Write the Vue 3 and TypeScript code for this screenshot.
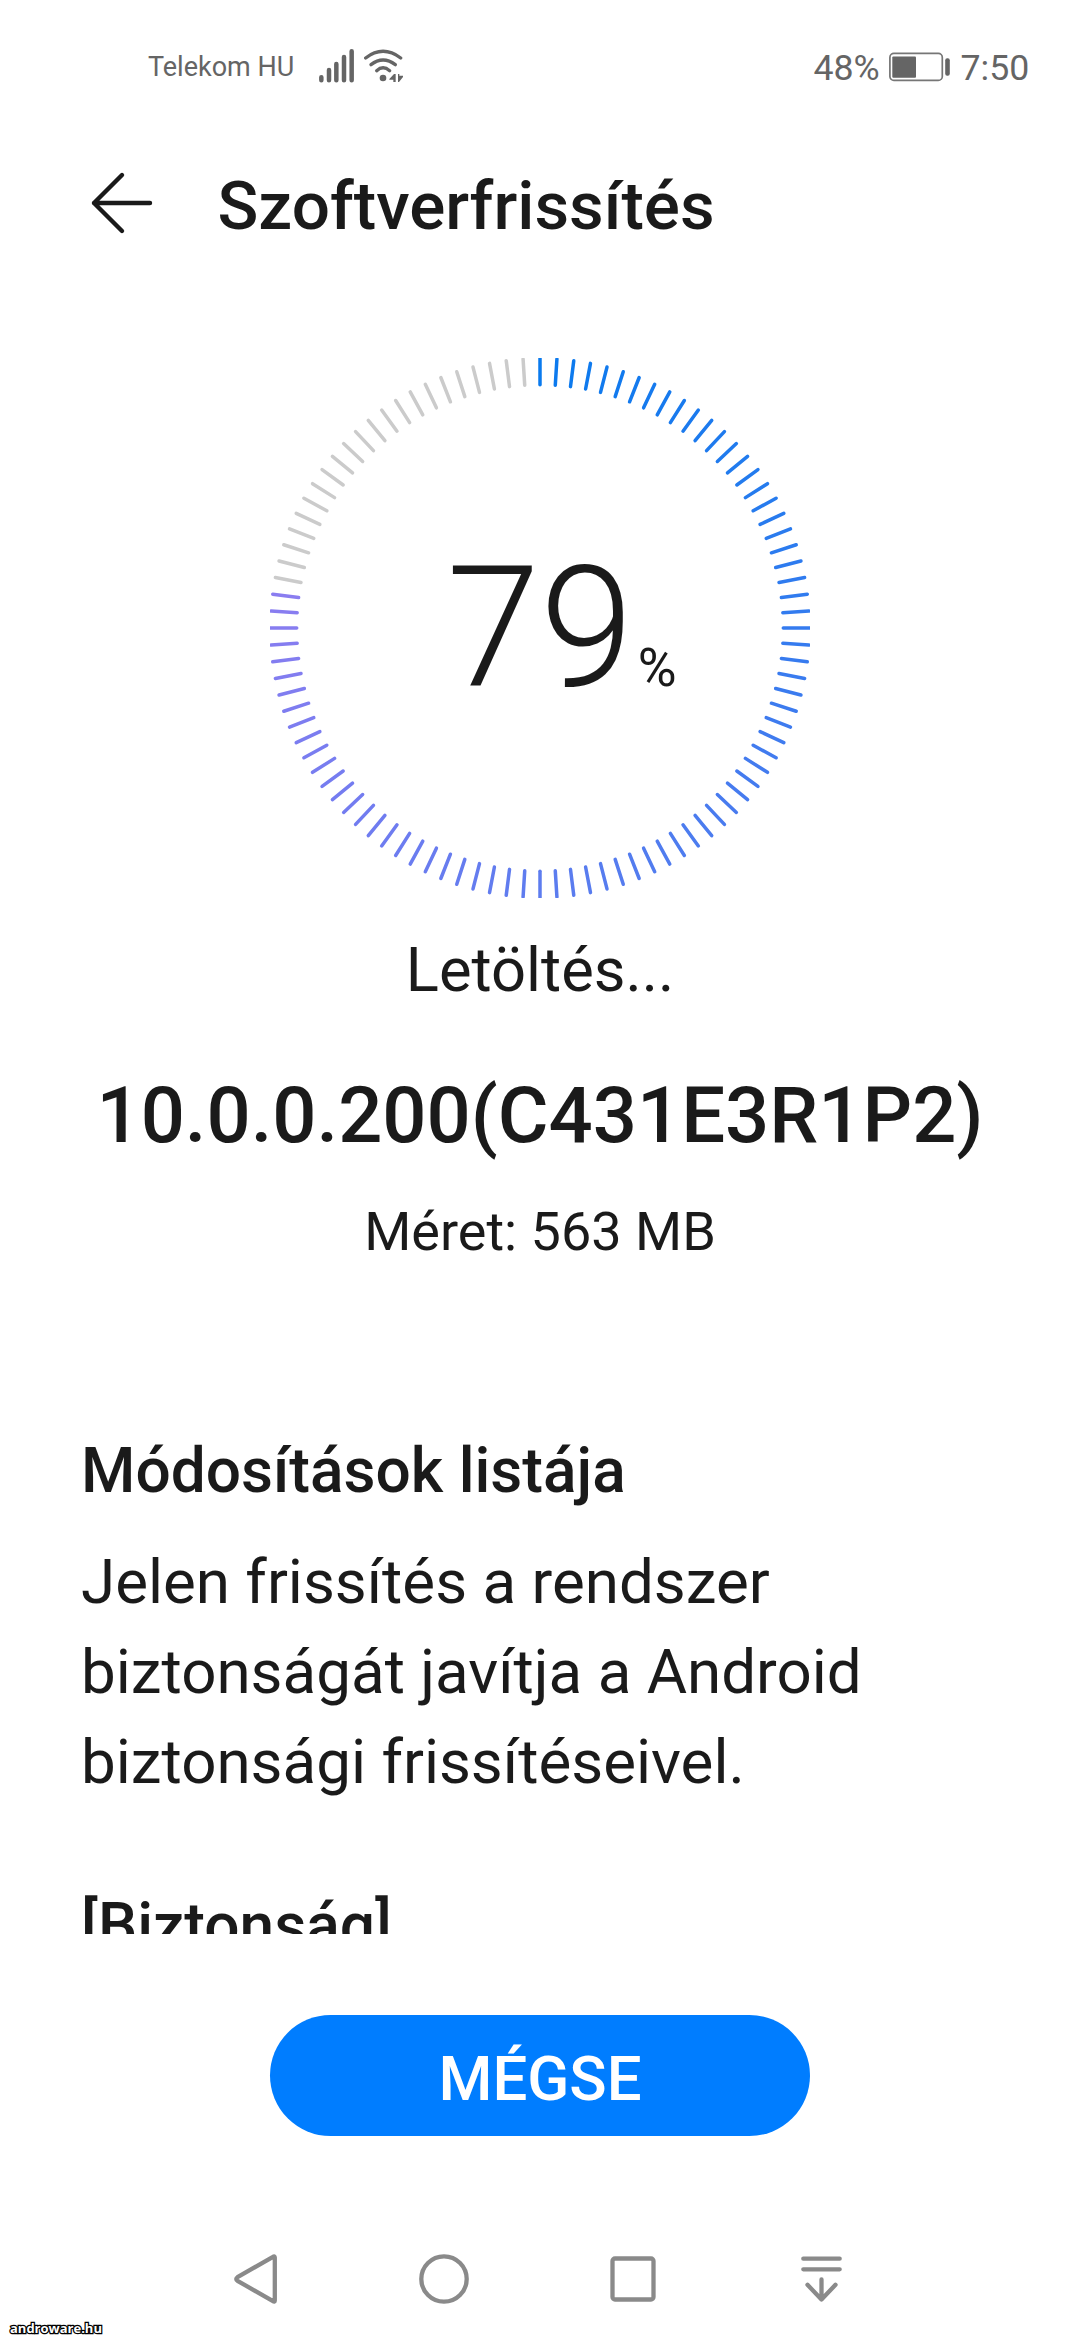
<script setup lang="ts">
interface Tick {
  x1: number
  y1: number
  x2: number
  y2: number
  color: string
}

const progress = 79
const tickCount = 100
const startColor = [10, 122, 238]
const endColor = [138, 125, 240]

const ticks: Tick[] = Array.from({ length: tickCount }, (_, i) => {
  const angle = (i / tickCount) * Math.PI * 2
  const sin = Math.sin(angle)
  const cos = Math.cos(angle)
  const t = i / (progress - 2)
  const mixed = startColor.map((c, k) => Math.round(c + (endColor[k] - c) * t))
  return {
    x1: 270 + 243.3 * sin,
    y1: 270 - 243.3 * cos,
    x2: 270 + 269.4 * sin,
    y2: 270 - 269.4 * cos,
    color: i < progress - 1 ? `rgb(${mixed.join(',')})` : '#cbcbcb',
  }
})
</script>

<template>
  <div class="screen">
    <div class="status">
      <span class="carrier">Telekom HU</span>
      <svg class="signals" viewBox="0 0 258 108" width="86" height="36">
        <g fill="none" stroke="#656565" stroke-linecap="round">
          <g stroke-width="13.5">
            <path d="M7 87.5V96.500M30 66V96.500M52 48V96.500M75 27V96.500M98 10V96.500" />
          </g>
          <g stroke-width="10">
            <path d="M140 30Q192 -10 245 30" />
            <path d="M156 50Q192 22 229 50" />
            <path d="M173 68Q192 51 212 68" />
          </g>
        </g>
        <circle cx="192" cy="90" r="10" fill="#656565" />
        <path d="M211 93L225 78H230V102H223V95H211ZM237 78H241V83H252V87L240 102H237Z" fill="#656565" />
      </svg>
      <span class="spacer"></span>
      <span class="percent">48%</span>
      <svg class="battery" viewBox="0 0 62 30" width="62" height="30">
        <rect x="0.900" y="1.400" width="52.400" height="27" rx="4" fill="none" stroke="#767676" stroke-width="1.700" />
        <rect x="3.300" y="4.500" width="23.700" height="21.300" rx="1" fill="#656565" />
        <rect x="56.200" y="6.300" width="4.600" height="17.400" rx="2" fill="#656565" />
      </svg>
      <span class="clock">7:50</span>
    </div>

    <div class="header">
      <svg class="back" viewBox="0 0 64 64" width="64" height="64">
        <path d="M33 4L5 32L33 60M5 32H61" fill="none" stroke="#1a1a1a" stroke-width="4.400" stroke-linecap="round" stroke-linejoin="round" />
      </svg>
      <h1>Szoftverfrissítés</h1>
    </div>

    <div class="content">
      <div class="ring">
        <svg viewBox="0 0 540 540" width="540" height="540">
          <line
            v-for="(tick, i) in ticks"
            :key="i"
            :x1="tick.x1"
            :y1="tick.y1"
            :x2="tick.x2"
            :y2="tick.y2"
            :stroke="tick.color"
            stroke-width="3.500"
            stroke-linecap="round"
          />
        </svg>
        <div class="value">
          <span class="number">{{ progress }}</span><span class="unit">%</span>
        </div>
      </div>
      <div class="state">Letöltés...</div>
      <div class="version">10.0.0.200(C431E3R1P2)</div>
      <div class="size">Méret: 563 MB</div>
      <div class="notes">
        <h2>Módosítások listája</h2>
        <p>Jelen frissítés a rendszer<br />biztonságát javítja a Android<br />biztonsági frissítéseivel.</p>
        <h2 class="next">[Biztonság]</h2>
      </div>
    </div>

    <button class="cancel" type="button">MÉGSE</button>

    <div class="nav">
      <svg viewBox="0 0 60 60" width="60" height="60">
        <path d="M48.800 8.600V51.400Q48.800 53.400 47 52.200L11.500 31.800Q9 30 11.500 28.200L47 7.800Q48.800 6.600 48.800 8.600Z" />
      </svg>
      <svg viewBox="0 0 60 60" width="60" height="60">
        <circle cx="30" cy="30" r="22.700" />
      </svg>
      <svg viewBox="0 0 60 60" width="60" height="60">
        <rect x="9.500" y="9.500" width="41" height="41" rx="2.500" />
      </svg>
      <svg viewBox="0 0 60 60" width="60" height="60">
        <path d="M12.300 9.700H48.700M12.300 20.300H48.700M30.500 30.500V50.500M16.500 35.800L30.500 50.500L44.500 35.800" />
      </svg>
    </div>

    <span class="watermark">androware.hu</span>
  </div>
</template>

<style>
body {
  background: #fff;
}
</style>

<style scoped>
.screen {
  position: relative;
  display: flex;
  flex-direction: column;
  width: 1080px;
  height: 2340px;
  overflow: hidden;
  background: #fff;
  color: #1a1a1a;
  font-family: Roboto, "Noto Sans", sans-serif;
}

.status {
  display: flex;
  align-items: center;
  box-sizing: border-box;
  height: 134px;
  padding: 0 50.500px 0 148px;
  color: #656565;
  white-space: nowrap;
}

.carrier {
  width: 171px;
  font-size: 27px;
}

.signals {
  margin-top: -2px;
}

.spacer {
  flex: 1;
}

.percent,
.clock {
  padding-top: 2px;
  font-size: 35.700px;
}

.percent {
  width: 75.600px;
}

.battery {
  width: 62px;
}

.clock {
  width: 69px;
  padding-left: 9.500px;
}

.header {
  display: flex;
  align-items: center;
  height: 144px;
  padding-left: 89px;
}

.back {
  margin-top: -7px;
}

h1 {
  margin: 0 0 0 64.500px;
  font-size: 67.400px;
  font-weight: 500;
  line-height: 80px;
}

.content {
  height: 1576px;
  padding-top: 80px;
  overflow: hidden;
  text-align: center;
}

.ring {
  display: grid;
  width: 540px;
  height: 540px;
  margin: 0 auto;
}

.ring > * {
  grid-area: 1 / 1;
}

.value {
  display: flex;
  align-items: baseline;
  padding: 186px 0 0 176.500px;
}

.number {
  font-size: 168.700px;
  font-weight: 300;
  line-height: 168px;
}

.unit {
  margin-left: 4px;
  font-size: 53px;
  line-height: 60px;
}

.state {
  margin-top: 32px;
  font-size: 61.500px;
  line-height: 80px;
}

.version {
  margin-top: 56px;
  font-size: 77.800px;
  font-weight: 500;
  line-height: 100px;
}

.size {
  margin-top: 30px;
  font-size: 54px;
  line-height: 71px;
}

.notes {
  margin-top: 164px;
  padding-left: 81px;
  text-align: left;
}

h2 {
  margin: 0;
  font-size: 62.200px;
  font-weight: 500;
  line-height: 80px;
}

p {
  margin: 26px 0 0;
  font-size: 61.900px;
  line-height: 90px;
}

.next {
  margin-top: 79px;
}

.cancel {
  align-self: center;
  width: 540px;
  height: 121px;
  margin-top: 81px;
  padding: 6px 0 0;
  border: 0;
  border-radius: 61px;
  background: #007dff;
  color: #fff;
  font-family: inherit;
  font-size: 61.700px;
  font-weight: 500;
  line-height: 80px;
}

.nav {
  display: flex;
  gap: 128.300px;
  margin-top: 113px;
  padding-left: 226px;
}

.nav svg {
  fill: none;
  stroke: #8a8a8a;
  stroke-width: 4.300;
  stroke-linecap: round;
  stroke-linejoin: round;
}

.watermark {
  position: absolute;
  left: 10px;
  bottom: 3px;
  color: #fff;
  font-family: "Open Sans", sans-serif;
  font-size: 13px;
  font-weight: 700;
  line-height: 18px;
  -webkit-text-stroke: 2.500px #000;
  paint-order: stroke fill;
}
</style>
